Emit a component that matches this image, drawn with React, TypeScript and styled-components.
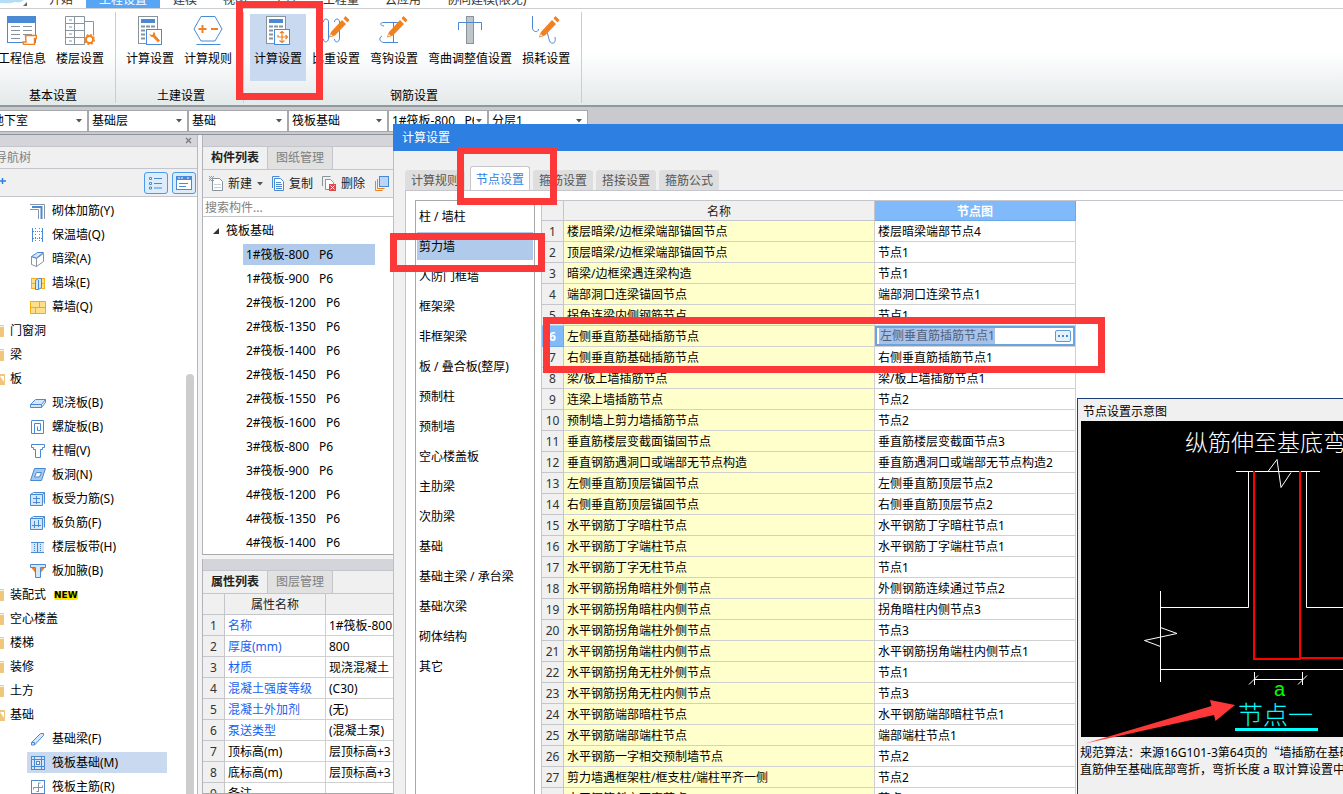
import React from "react";
import styled, { createGlobalStyle, css } from "styled-components";

const BLUE = "#4a8ad4";
const PALE = "#d6e6f8";
const ORANGE = "#f08122";
const GREY = "#87939d";
const LINE = "#c5c6cc";
const MARK = "#fc3838";

const Global = createGlobalStyle`
  * { box-sizing: border-box; }
  html, body, #root { height: 100%; }
  body {
    margin: 0;
    overflow: hidden;
    background: #fff;
    color: #000;
    font: 12px/18px "Noto Sans", "Noto Sans CJK SC", sans-serif;
  }
  button, input, select { font: inherit; color: inherit; border: 0; padding: 0; margin: 0; background: none; }
  ul { list-style: none; margin: 0; padding: 0; }
  svg { display: block; flex: none; }
`;

const Window = styled.div`
  position: relative;
  display: flex;
  flex-direction: column;
  height: 100vh;
  overflow: hidden;
  white-space: nowrap;
`;

/* ---------- menu tabs ---------- */
const MenuBar = styled.nav`
  display: flex;
  align-items: flex-end;
  flex: none;
  height: 9px;
  overflow: hidden;
  border-bottom: 1px solid #cfcfcf;
`;
const Logo = styled.div`
  display: flex;
  align-items: flex-end;
  width: 32px;
  height: 9px;
  flex: none;
  background: #fff;
`;
const MenuTab = styled.button<{ $active?: boolean }>`
  flex: none;
  height: 17px;
  padding: 0 13px;
  line-height: 17px;
  color: #333;
  ${(p) => p.$active && css`background: #57a5f5; color: #fff;`}
`;
const MenuTabs = styled.div`
  display: flex;
  padding-left: 4px;
`;

/* ---------- ribbon ---------- */
const Ribbon = styled.div`
  display: flex;
  flex: none;
  height: 98px;
  background: linear-gradient(#fff 45%, #e4e9ea);
  border-bottom: 2px solid #92979c;
`;
const RibbonGroup = styled.section<{ $first?: boolean }>`
  display: flex;
  flex-direction: column;
  align-items: center;
  margin: 3px 0 2px ${(p) => (p.$first ? "-12px" : "0")};
  padding: 2px 7px 0 6px;
  border-right: 1px solid #cbcdd0;
`;
const RibbonItems = styled.div`
  display: flex;
  gap: 2px;
  flex: none;
`;
const RibbonButton = styled.button<{ $active?: boolean }>`
  display: flex;
  flex-direction: column;
  align-items: center;
  gap: 5px;
  height: 67px;
  padding: 1px 4px 0;
  background: ${(p) => (p.$active ? "#c9d9ef" : "transparent")};
`;
const GroupTitle = styled.div`
  padding: 6px 0 0 4px;
`;

/* ---------- selectors ---------- */
const SelectorBar = styled.div`
  display: flex;
  flex: none;
  height: 28px;
  padding-top: 3px;
  background: #c8cacf;
  border-bottom: 1px solid #8f9499;
`;
const Combo = styled.label<{ $first?: boolean }>`
  display: grid;
  align-items: center;
  flex: none;
  width: 100px;
  height: 22px;
  margin-left: ${(p) => (p.$first ? "-12px" : "0")};
  padding: 0 5px 0 3px;
  background: #fff;
  border: 1px solid #a6a8ab;
  > * { grid-area: 1 / 1; }
  > svg { justify-self: end; background: #fff; }
`;
const ComboSelect = styled.select`
  appearance: none;
  width: 82px;
  height: 18px;
  outline: 0;
  overflow: hidden;
  text-overflow: clip;
`;

/* ---------- docked panels ---------- */
const Workspace = styled.div`
  display: flex;
  flex: 1;
  min-height: 0;
  background: #f3f3f5;
`;
const Dock = styled.aside<{ $w: number }>`
  display: flex;
  flex-direction: column;
  width: ${(p) => p.$w}px;
  flex: none;
  min-height: 0;
`;
const NavDock = styled(Dock)`
  margin-right: 4px;
  border-right: 1px solid #b7b8bf;
`;
const ListDock = styled(Dock)`
  gap: 4px;
`;
const DockPanel = styled.section<{ $h?: number }>`
  display: flex;
  flex-direction: column;
  min-height: 0;
  overflow: hidden;
  flex: ${(p) => (p.$h ? `none` : "1")};
  height: ${(p) => (p.$h ? `${p.$h}px` : "auto")};
  border-left: 1px solid #b2b3b8;
  border-bottom: 1px solid #a9a9a9;
  background: #fff;
`;
const Strip = styled.div`
  display: flex;
  justify-content: flex-end;
  align-items: center;
  flex: none;
  height: 12px;
  padding-right: 5px;
  background: #d4d5db;
  border-bottom: 1px solid ${LINE};
`;
const NavTitle = styled.h2`
  flex: none;
  height: 22px;
  margin: 0 0 0 -5px;
  font: inherit;
  line-height: 21px;
  color: #808080;
  background: #f0f0f0;
  border-bottom: 1px solid ${LINE};
`;
const NavTools = styled.div`
  display: flex;
  align-items: center;
  gap: 4px;
  flex: none;
  height: 28px;
  padding-right: 1px;
  background: #f0f0f0;
  border-bottom: 1px solid ${LINE};
  > :first-child { margin-right: auto; }
`;
const ModeButton = styled.button`
  display: grid;
  place-items: center;
  width: 24px;
  height: 22px;
  background: #dcecfb;
  border: 1px solid #4a9bec;
  border-radius: 3px;
`;
const NavBody = styled.div`
  display: flex;
  flex: 1;
  min-height: 0;
  overflow: hidden;
  background: #fff;
`;
const NavList = styled.ul`
  display: flex;
  flex-direction: column;
  flex: 1;
  padding-top: 2px;
`;
const NavGroup = styled.li`
  display: flex;
  align-items: center;
  gap: 5px;
  flex: none;
  height: 24px;
`;
const NavLeaf = styled.li<{ $active?: boolean }>`
  display: flex;
  align-items: center;
  gap: 6px;
  flex: none;
  height: 21px;
  margin: 1px 19px 2px 27px;
  padding-left: 3px;
  background: ${(p) => (p.$active ? "#c9d9ef" : "transparent")};
`;
const NewBadge = styled.span`
  margin-left: 3px;
  font: bold 9px/9px "DejaVu Sans", sans-serif;
  background: #ffe600;
  border-radius: 2px;
`;
const Track = styled.div`
  width: 11px;
  padding: 177px 3px 0 0;
`;
const Thumb = styled.div`
  height: 100%;
  width: 8px;
  border-radius: 4px 4px 0 0;
  background: #cdcdcd;
`;

const Tabs = styled.div`
  display: flex;
  flex: none;
  height: 23px;
  background: #f0f0f0;
  border-bottom: 1px solid ${LINE};
`;
const PanelTab = styled.button<{ $active?: boolean }>`
  width: 65px;
  height: 22px;
  border-right: 1px solid ${LINE};
  color: #808080;
  background: #e1e1e1;
  ${(p) => p.$active && css`background: #f0f0f0; color: #222; font-weight: bold;`}
`;
const Toolbar = styled.div`
  display: flex;
  align-items: center;
  gap: 9px;
  flex: none;
  height: 28px;
  padding: 0 6px;
  background: #f0f0f0;
  border-bottom: 1px solid ${LINE};
`;
const ToolButton = styled.button`
  display: flex;
  align-items: center;
  gap: 5px;
  flex: none;
  color: #222;
`;
const Search = styled.input`
  flex: none;
  height: 19px;
  padding-left: 2px;
  border-bottom: 1px solid ${LINE};
  outline: 0;
  &::placeholder { color: #808080; opacity: 1; }
`;
const PartTree = styled.div`
  flex: 1;
  min-height: 0;
  overflow: hidden;
  padding-top: 2px;
`;
const PartRoot = styled.div`
  display: flex;
  align-items: center;
  gap: 7px;
  height: 24px;
  padding-left: 10px;
`;
const PartItem = styled.li<{ $active?: boolean }>`
  display: flex;
  gap: 10px;
  height: 21px;
  margin: 1px 67px 3px 40px;
  padding-left: 3px;
  line-height: 21px;
  background: ${(p) => (p.$active ? "#b0caec" : "transparent")};
`;

/* ---------- tables ---------- */
const Grid = styled.table`
  border-collapse: separate;
  border-spacing: 0;
  table-layout: fixed;
  flex: none;
  th, td {
    height: 21px;
    padding: 2px 0 0 3px;
    line-height: 18px;
    font-weight: normal;
    text-align: left;
    overflow: hidden;
    border: solid #d0d0d0;
    border-width: 0 1px 1px 0;
  }
  thead th { background: #f0f0f0; border-color: ${LINE}; text-align: center; color: #222; padding: 2px 0 0; }
  tbody th { background: #f0f0f0; border-color: ${LINE}; text-align: center; color: #333; padding: 2px 0 0; }
`;
const PropTable = styled(Grid)`
  width: 240px;
`;
const PropName = styled.td<{ $link: boolean }>`
  color: ${(p) => (p.$link ? "#1a5ef0" : "#000")};
`;
const NodeTable = styled(Grid)`
  width: 534px;
  thead th { height: 20px; line-height: 17px; }
`;
const NodeHead = styled.th`
  && { background: #80bafa; color: #fff; font-weight: bold; border-color: #6aa9e9; }
`;
const NodeIndex = styled.th<{ $active: boolean }>`
  ${(p) => p.$active && css`&& { background: #80bafa; color: #fff; font-weight: bold; border-color: #6aa9e9; }`}
`;
const NodeName = styled.td`
  background: #ffffcb;
`;
const EditCell = styled.td`
  && { padding: 0; }
`;
const Editor = styled.div`
  display: flex;
  align-items: center;
  justify-content: space-between;
  height: 20px;
  padding: 0 4px;
  outline: 2px solid #69a3e0;
  outline-offset: -2px;
`;
const EditInput = styled.input`
  width: 116px;
  height: 16px;
  padding-left: 1px;
  line-height: 16px;
  color: #50607c;
  background: #a6c2ea;
  outline: 0;
`;
const MoreButton = styled.button`
  display: grid;
  place-items: center;
  width: 16px;
  height: 12px;
  border: 1px solid #5b9bdc;
  border-radius: 2px;
  background: #e6f1fc;
`;

/* ---------- dialog ---------- */
const Dialog = styled.section`
  position: absolute;
  top: 124px;
  left: 393px;
  right: 0;
  bottom: 0;
  display: flex;
  flex-direction: column;
  background: #f0f0f0;
`;
const DialogTitle = styled.h1`
  flex: none;
  margin: 0;
  height: 27px;
  padding-left: 9px;
  font: inherit;
  line-height: 27px;
  color: #fff;
  background: #2d7fe1;
`;
const DialogBody = styled.div`
  display: flex;
  flex-direction: column;
  flex: 1;
  min-height: 0;
  padding: 15px 0 0 11px;
  border-left: 1px solid #bdbdc8;
`;
const DialogTabs = styled.div`
  display: flex;
  align-items: flex-end;
  gap: 3px;
  flex: none;
  height: 24px;
`;
const DialogTab = styled.button<{ $active?: boolean }>`
  flex: none;
  width: 60px;
  height: 20px;
  padding-top: 2px;
  color: #555;
  background: #dedede;
  border-radius: 3px 3px 0 0;
  ${(p) =>
    p.$active &&
    css`
      height: 25px;
      margin: 0 0 -1px 2px;
      color: #2d7fe1;
      background: #fff;
      border: 1px solid ${LINE};
      border-bottom: 0;
    `}
`;
const Pane = styled.div`
  display: flex;
  flex: 1;
  min-height: 0;
  gap: 6px;
  padding: 9px 0 0 9px;
  background: #fff;
  border: solid ${LINE};
  border-width: 1px 0 0 1px;
`;
const CategoryList = styled.ul`
  flex: none;
  width: 120px;
  padding: 1px;
  border: solid #a9a9a9;
  border-width: 1px 1px 0;
`;
const Category = styled.li<{ $active?: boolean }>`
  height: 28px;
  margin-bottom: 2px;
  padding: 2px 0 0 2px;
  line-height: 26px;
  background: ${(p) => (p.$active ? "#b0caec" : "transparent")};
`;
const TableArea = styled.div`
  flex: 1;
  min-width: 0;
  overflow: hidden;
  border: solid ${LINE};
  border-width: 1px 0 0 1px;
`;

/* ---------- node preview ---------- */
const Preview = styled.section`
  position: absolute;
  top: 398px;
  left: 1077px;
  right: 0;
  bottom: 0;
  overflow: hidden;
  padding: 4px 0 0 3px;
  background: #f0f0f0;
  border: solid #1d3f7a;
  border-width: 1px 0 0 1px;
`;
const PreviewTitle = styled.h2`
  margin: 0 0 0 2px;
  font: inherit;
`;
const Drawing = styled.svg`
  background: #000;
`;
const Note = styled.p`
  margin: 7px 0 0 -1px;
  line-height: 17px;
`;
const WideQuote = styled.span`
  font-family: "Noto Sans CJK SC", sans-serif;
  line-height: 1;
`;
const Pointer = styled.svg`
  position: absolute;
  left: 1080px;
  top: 695px;
`;
const Mark = styled.div<{ $x: number; $y: number; $w: number; $h: number }>`
  position: absolute;
  left: ${(p) => p.$x}px;
  top: ${(p) => p.$y}px;
  width: ${(p) => p.$w}px;
  height: ${(p) => p.$h}px;
  border: 7px solid ${MARK};
  pointer-events: none;
`;

/* ---------- icons ---------- */
const Caret = () => (
  <svg width="6" height="4" viewBox="0 0 6 4"><path d="M0 0h6L3 3.5z" fill="#555" /></svg>
);

const CalcBase = () => (
  <>
    <rect x="3.5" y="1.5" width="19" height="27" fill="#fff" stroke={GREY} />
    <rect x="6" y="4" width="14" height="4" fill={BLUE} />
    <path d="M6 11.5h14M6 15.5h14M6 19.5h14M6 23.5h14" stroke={GREY} strokeWidth="2" strokeDasharray="4 1" />
    <rect x="11.5" y="14.5" width="15" height="15" fill="#fff" stroke={BLUE} />
  </>
);
const Pencil = () => (
  <g>
    <path d="M10 17L21 5l4 4L14 20.500l-6 2z" fill={ORANGE} />
    <path d="M22.500 3.500l2-2.500 4 4-2 2.500z" fill={ORANGE} />
    <path d="M8.500 22l1.200-3.500 2.300 2.200z" fill="#fff" stroke={ORANGE} strokeWidth=".6" />
  </g>
);
const ribbonArt: Record<string, React.ReactNode> = {
  info: (
    <>
      <rect x=".5" y="1.500" width="28" height="26" fill="#fff" stroke={BLUE} />
      <rect x="0" y="1" width="29" height="7" fill={BLUE} />
      <path d="M4 11.500h9M16 11.500h9M4 15.500h9M16 15.500h9M4 19.500h9M16 19.500h9M4 23.500h9" stroke={GREY} />
      <path d="M18.500 20.500h11v3h-2v6h-10c-1 0-1.500-1-1.500-2.500h3z" fill="#fff" stroke={ORANGE} strokeWidth="1.500" />
    </>
  ),
  floors: (
    <>
      <path d="M.5 1.500h19v28H.5zM.5 8.500h19M.5 15.500h19M.5 22.500h19M9.500 1.500v28M19.500 6.500h9v14" fill="none" stroke={GREY} />
      <path d="M4 5h3M4 12h3M4 19h3M4 26h3" stroke={GREY} />
      <circle cx="24.500" cy="24.500" r="3.500" fill="#fff" stroke={ORANGE} strokeWidth="2" />
      <circle cx="24.500" cy="24.500" r="4.800" fill="none" stroke={ORANGE} strokeWidth="1.500" strokeDasharray="2 1.770" />
    </>
  ),
  calc: (
    <>
      <CalcBase />
      <path d="M18 20l6 6.500" stroke={ORANGE} strokeWidth="2.600" />
      <path d="M14.500 18.500c0 3 2.500 4 4.500 3s1.500-4-.5-4.500l-.500 2.500-2 .5z" fill={ORANGE} />
    </>
  ),
  rules: (
    <>
      <path d="M8 1.500h14l7 12.500-7 12H8L1 14zM3.500 29.500h24" fill="none" stroke={BLUE} />
      <path d="M5.500 14h8M9.500 10v8M18 14h7" stroke={ORANGE} strokeWidth="2" />
    </>
  ),
  bend: (
    <>
      <CalcBase />
      <path d="M19 17v10M19 22h5M15 20v2h4M16.500 25.500l2.500 2 2.500-2M22.500 20l2 2-2 2M17 18l2-1.500 2 1.500" stroke={ORANGE} strokeWidth="1.200" fill="none" />
    </>
  ),
  weight: (
    <>
      <path d="M2.500 7c0-4 5-4 5 0v16c0 5-5 5-5 1M13.500 7c0-4 5-4 5 0v16c0 5-5 5-5 1" fill="none" stroke={BLUE} />
      <Pencil />
    </>
  ),
  hook: (
    <>
      <path d="M5 11c-5-1-4-3.500 0-3.500h14M14.500 8v20M3 21c-4 2-2 6.500 2 6.500h14" fill="none" stroke={BLUE} />
      <Pencil />
    </>
  ),
  adjust: (
    <>
      <rect x="11.500" y="1.500" width="7" height="27" fill="#bfc6ca" stroke={GREY} />
      <path d="M3.500 15V7.500h23V15" fill="none" stroke={BLUE} />
    </>
  ),
  loss: (
    <>
      <path d="M1.500 1v12c0 4 6 5 6 1M12.500 15c6 0 4 12 8 13s4-3 3.500-6" fill="none" stroke={BLUE} />
      <Pencil />
    </>
  ),
};
const RibbonIcon = ({ k }: { k: string }) => (
  <svg width="30" height="30" viewBox="0 0 30 30">{ribbonArt[k]}</svg>
);

const navArt: Record<string, React.ReactNode> = {
  masonry: <><path d="M0 1.500h14.500V16M0 6.500h8.500V16" fill="none" stroke={GREY} /><path d="M2 4h9.500v12" fill="none" stroke={BLUE} strokeWidth="2" /></>,
  insul: <><path d="M2.500 1v14M12.500 1v14" stroke={BLUE} /><path d="M5.500 1v14M9.500 1v14" stroke={BLUE} strokeDasharray="1 2" /><path d="M3 4.500h9M3 11.500h9" stroke={BLUE} strokeDasharray="1 1" /></>,
  beam: <><path d="M1.500 5.500l5 2v8l-5-2zM6.500 7.500l7-5v8l-7 5" fill="#fff" stroke={GREY} /><path d="M1.500 5.500l6-4h6l-7 5.500z" fill={PALE} stroke={BLUE} /></>,
  pier: <><rect x="1.500" y="3.500" width="13" height="10" fill="#ffe08a" stroke="#f5b11c" /><path d="M2 8.500h13" stroke="#f5b11c" /><path d="M5.500 5.500l3-2h3v9l-3 2h-3zM8.500 5v9" fill={PALE} stroke={BLUE} /></>,
  curtain: <><path d="M.5 2.500h15v12H.5zM.5 8.500h15M9.500 2.500v6M5.500 8.500v6" fill="#ffe08a" stroke="#f7ac00" /></>,
  slab: <><path d="M.5 9.500l5-5h10l-4 5z M.5 9.500v3h11v-3M11.500 12.500l4-5v-3" fill={PALE} stroke={BLUE} /></>,
  spiral: <path d="M1.500 2v12.500h12v-13h-12M4.500 14.500v-10h6v7h-3v-4" fill="none" stroke={BLUE} />,
  cap: <path d="M1.500 1.500h13v3h-2v2h-2v8h-5v-8h-2v-2h-2z" fill="#fff" stroke={BLUE} />,
  hole: <><path d="M4.500 1.500h11l-4 12h-11z" fill="#a5c8ef" stroke={BLUE} /><path d="M6.500 5.500h5l-2 4.500h-5z" fill="#fff" stroke={BLUE} /></>,
  rebarS: <><path d="M3.500 1.500h11v11M.5 3.500h12v11H.5zM12.500 3.500l2-2M.5 3.500l3-2" fill={PALE} stroke={BLUE} /><path d="M3 7.500h7M3 11.500h7M6.500 5v8" stroke={BLUE} /></>,
  rebarF: <><path d="M3.500 1.500h11v11M.5 3.500h12v11H.5zM12.500 3.500l2-2M.5 3.500l3-2" fill={PALE} stroke={BLUE} /><path d="M2 10.500h9M4.500 6v7M8.500 5v7" stroke={BLUE} /></>,
  strip: <><rect x="1" y="3" width="13" height="11" fill={PALE} /><path d="M1 3.500h13M1 13.500h13M7.500 3v11" stroke={BLUE} /><path d="M4.500 5v8M10.500 5v8" stroke={BLUE} strokeDasharray="1 1" /></>,
  haunch: <><path d="M.5 1.500h15v3h-5v10h-5v-10h-5z" fill={PALE} stroke={BLUE} /><path d="M1.500 5H5v4.500zM14.500 5H11v4.500z" fill={ORANGE} /></>,
  fbeam: <path d="M1.500 11.500l9-9h3v2l-9 9.500h-3zM1.500 11.500h3v2.500" fill={PALE} stroke={BLUE} />,
  raft: <><rect x="1.500" y="1.500" width="13" height="13" fill={PALE} stroke={BLUE} /><path d="M4.500 1v14M11.500 1v14M1 4.500h14M1 11.500h14" stroke={BLUE} /><rect x="6.500" y="6.500" width="3" height="3" fill="#fff" stroke={BLUE} /></>,
  raftbar: <><rect x="1.500" y="1.500" width="13" height="13" fill="#fff" stroke={BLUE} /><path d="M8.500 4v9M3.500 8.500h9v-2M3.500 8.500v2M8.500 4h2M8.500 12.500h-2" fill="none" stroke={GREY} /></>,
};
const NavIcon = ({ k }: { k: string }) => (
  <svg width="16" height="16" viewBox="0 0 16 16">{navArt[k]}</svg>
);
const Folder = ({ open }: { open?: boolean }) => (
  <svg width="5" height="14" viewBox="0 0 5 14">
    {open ? (
      <><path d="M0 2h5v11H0z" fill="#f0c57c" /><path d="M0 4h4v6z" fill="#fff" /></>
    ) : (
      <><path d="M0 1h4v12H0z" fill="#f0c57c" /><path d="M0 2.500h4" stroke="#fff4dc" /></>
    )}
  </svg>
);

/* ---------- data ---------- */
const menus = ["开始", "工程设置", "建模", "视图", "工具", "工程量", "云应用", "协同建模(限免)"];
const ribbonGroups = [
  { title: "基本设置", items: [["工程信息", "info"], ["楼层设置", "floors"]] },
  { title: "土建设置", items: [["计算设置", "calc"], ["计算规则", "rules"]] },
  { title: "钢筋设置", items: [["计算设置", "bend"], ["比重设置", "weight"], ["弯钩设置", "hook"], ["弯曲调整值设置", "adjust"], ["损耗设置", "loss"]] },
];
const combos = ["地下室", "基础层", "基础", "筏板基础", "1#筏板-800\u00a0\u00a0\u00a0P6", "分层1"];
type Nav = { t: string; k?: string; open?: boolean; badge?: string };
const nav: Nav[] = [
  { t: "砌体加筋(Y)", k: "masonry" }, { t: "保温墙(Q)", k: "insul" }, { t: "暗梁(A)", k: "beam" },
  { t: "墙垛(E)", k: "pier" }, { t: "幕墙(Q)", k: "curtain" },
  { t: "门窗洞" }, { t: "梁" }, { t: "板", open: true },
  { t: "现浇板(B)", k: "slab" }, { t: "螺旋板(B)", k: "spiral" }, { t: "柱帽(V)", k: "cap" }, { t: "板洞(N)", k: "hole" },
  { t: "板受力筋(S)", k: "rebarS" }, { t: "板负筋(F)", k: "rebarF" }, { t: "楼层板带(H)", k: "strip" }, { t: "板加腋(B)", k: "haunch" },
  { t: "装配式", badge: "NEW" }, { t: "空心楼盖" }, { t: "楼梯" }, { t: "装修" }, { t: "土方" }, { t: "基础", open: true },
  { t: "基础梁(F)", k: "fbeam" }, { t: "筏板基础(M)", k: "raft" }, { t: "筏板主筋(R)", k: "raftbar" },
];
const parts = ["1#筏板-800", "1#筏板-900", "2#筏板-1200", "2#筏板-1350", "2#筏板-1400", "2#筏板-1450", "2#筏板-1550", "2#筏板-1600", "3#筏板-800", "3#筏板-900", "4#筏板-1200", "4#筏板-1350", "4#筏板-1400"];
const props: [string, string][] = [
  ["名称", "1#筏板-800\u00a0\u00a0P6"], ["厚度(mm)", "800"], ["材质", "现浇混凝土"], ["混凝土强度等级", "(C30)"],
  ["混凝土外加剂", "(无)"], ["泵送类型", "(混凝土泵)"], ["顶标高(m)", "层顶标高+3"], ["底标高(m)", "层顶标高+3"], ["备注", ""],
];
const categories = ["柱 / 墙柱", "剪力墙", "人防门框墙", "框架梁", "非框架梁", "板 / 叠合板(整厚)", "预制柱", "预制墙", "空心楼盖板", "主肋梁", "次肋梁", "基础", "基础主梁 / 承台梁", "基础次梁", "砌体结构", "其它"];
const nodes: [string, string][] = [
  ["楼层暗梁/边框梁端部锚固节点", "楼层暗梁端部节点4"],
  ["顶层暗梁/边框梁端部锚固节点", "节点1"],
  ["暗梁/边框梁遇连梁构造", "节点1"],
  ["端部洞口连梁锚固节点", "端部洞口连梁节点1"],
  ["拐角连梁内侧钢筋节点", "节点1"],
  ["左侧垂直筋基础插筋节点", "左侧垂直筋插筋节点1"],
  ["右侧垂直筋基础插筋节点", "右侧垂直筋插筋节点1"],
  ["梁/板上墙插筋节点", "梁/板上墙插筋节点1"],
  ["连梁上墙插筋节点", "节点2"],
  ["预制墙上剪力墙插筋节点", "节点2"],
  ["垂直筋楼层变截面锚固节点", "垂直筋楼层变截面节点3"],
  ["垂直钢筋遇洞口或端部无节点构造", "垂直筋遇洞口或端部无节点构造2"],
  ["左侧垂直筋顶层锚固节点", "左侧垂直筋顶层节点2"],
  ["右侧垂直筋顶层锚固节点", "右侧垂直筋顶层节点2"],
  ["水平钢筋丁字暗柱节点", "水平钢筋丁字暗柱节点1"],
  ["水平钢筋丁字端柱节点", "水平钢筋丁字端柱节点1"],
  ["水平钢筋丁字无柱节点", "节点1"],
  ["水平钢筋拐角暗柱外侧节点", "外侧钢筋连续通过节点2"],
  ["水平钢筋拐角暗柱内侧节点", "拐角暗柱内侧节点3"],
  ["水平钢筋拐角端柱外侧节点", "节点3"],
  ["水平钢筋拐角端柱内侧节点", "水平钢筋拐角端柱内侧节点1"],
  ["水平钢筋拐角无柱外侧节点", "节点1"],
  ["水平钢筋拐角无柱内侧节点", "节点3"],
  ["水平钢筋端部暗柱节点", "水平钢筋端部暗柱节点1"],
  ["水平钢筋端部端柱节点", "端部端柱节点1"],
  ["水平钢筋一字相交预制墙节点", "节点2"],
  ["剪力墙遇框架柱/框支柱/端柱平齐一侧", "节点2"],
  ["水平钢筋斜交丁字节点", "节点1"],
];

const NodeDrawing = () => (
  <Drawing width="320" height="316" viewBox="0 0 320 316">
    <g fontFamily='"Noto Sans CJK SC", sans-serif' fontWeight="300">
      <text x="104" y="30" fontSize="23" fill="#fff">纵筋伸至基底弯折</text>
      <text x="157" y="303" fontSize="25" fill="#00ffff">节点一</text>
    </g>
    <text x="193" y="275" fontSize="20" fill="#00ff00" fontFamily='"Liberation Sans", sans-serif'>a</text>
    <g fill="none" stroke="#fff">
      <path d="M155 50.500h84M167.500 50v136.500h-88M225.500 50v136.500H320M79.500 170v91M79.500 248.500H320" />
      <path d="M187 50.500l9-12 4 28 10-15M79.500 206.500l16.500 6-32.500 7 16 6" />
      <path d="M173.500 251v13M221.500 251v13M173 258.500h49M168 263.500l9-9M217 263.500l9-9" />
    </g>
    <path d="M173 50v188h46V50M219 237h101" fill="none" stroke="#f00" strokeWidth="2" />
    <path d="M154 308.500h83" stroke="#00ffff" strokeWidth="3" />
  </Drawing>
);

export default function App() {
  return (
    <>
      <Global />
      <Window>
        <MenuBar>
          <Logo>
            <svg width="32" height="9" viewBox="0 0 32 9">
              <path d="M0 0h25c-3 3-6 4-10 3-5 2-10 1-15 1z" fill="#b5def5" />
              <path d="M27 3v4h-4z" fill="#666" />
            </svg>
          </Logo>
          <MenuTabs>
            {menus.map((m, i) => <MenuTab key={m} $active={i === 1}>{m}</MenuTab>)}
          </MenuTabs>
        </MenuBar>

        <Ribbon>
          {ribbonGroups.map((g, gi) => (
            <RibbonGroup key={g.title} $first={gi === 0}>
              <RibbonItems>
                {g.items.map(([t, k]) => (
                  <RibbonButton key={k} $active={k === "bend"}><RibbonIcon k={k} />{t}</RibbonButton>
                ))}
              </RibbonItems>
              <GroupTitle>{g.title}</GroupTitle>
            </RibbonGroup>
          ))}
        </Ribbon>

        <SelectorBar>
          {combos.map((c, i) => (
            <Combo key={c} $first={i === 0}>
              <ComboSelect aria-label={c}><option>{c}</option></ComboSelect>
              <Caret />
            </Combo>
          ))}
        </SelectorBar>

        <Workspace>
          <NavDock $w={198}>
            <Strip>
              <svg width="7" height="7" viewBox="0 0 7 7"><path d="M1 1l5 5M6 1l-5 5" stroke="#777" strokeWidth="1.200" /></svg>
            </Strip>
            <NavTitle>导航树</NavTitle>
            <NavTools>
              <svg width="6" height="12" viewBox="0 0 6 12"><path d="M0 4h6M2.500 1v6" stroke="#2d7fe1" strokeWidth="1.500" /></svg>
              <ModeButton aria-label="列表">
                <svg width="14" height="14" viewBox="0 0 14 14"><path d="M5 2.500h8M5 7.500h8M5 12h8" stroke={BLUE} /><path d="M.5 1.500h2v2h-2zM.5 6.500h2v2h-2zM.5 11h2v2h-2z" fill="#fff" stroke={BLUE} /></svg>
              </ModeButton>
              <ModeButton aria-label="图标">
                <svg width="16" height="14" viewBox="0 0 16 14"><rect x=".5" y=".5" width="15" height="13" fill="#fff" stroke={BLUE} /><path d="M0 0h16v4H0z" fill={BLUE} /><path d="M2 2h6M11 2h3" stroke="#fff" strokeDasharray="2 1" /><path d="M3 7.500h9M3 10.500h7" stroke={BLUE} /></svg>
              </ModeButton>
            </NavTools>
            <NavBody>
              <NavList>
                {nav.map((n) =>
                  n.k ? (
                    <NavLeaf key={n.t} $active={n.k === "raft"}><NavIcon k={n.k} />{n.t}</NavLeaf>
                  ) : (
                    <NavGroup key={n.t}><Folder open={n.open} />{n.t}{n.badge && <NewBadge>{n.badge}</NewBadge>}</NavGroup>
                  )
                )}
              </NavList>
              <Track><Thumb /></Track>
            </NavBody>
          </NavDock>

          <ListDock $w={240}>
            <DockPanel>
              <Strip />
              <Tabs>
                <PanelTab $active>构件列表</PanelTab>
                <PanelTab>图纸管理</PanelTab>
              </Tabs>
              <Toolbar>
                <ToolButton>
                  <svg width="14" height="15" viewBox="0 0 14 15"><path d="M3.500 2.500h7l3 3v9h-10z" fill="#fff" stroke={GREY} /><path d="M5 8.500h7M5 11.500h7" stroke="#c9cdd1" /><path d="M0 .5h5M1 1.500h4M0 2.500h5M1 3.500h4M0 4.500h5" stroke={ORANGE} strokeDasharray="1 1" /></svg>
                  新建<Caret />
                </ToolButton>
                <ToolButton>
                  <svg width="12" height="15" viewBox="0 0 12 15"><path d="M.5 12V.5h7" fill="none" stroke={BLUE} /><path d="M2.500 2.500h6l3 3v9h-9z" fill="#fff" stroke={BLUE} /><path d="M4 6.500h5M4 8.500h6M4 10.500h6M4 12.500h6" stroke={BLUE} /></svg>
                  复制
                </ToolButton>
                <ToolButton>
                  <svg width="14" height="15" viewBox="0 0 14 15"><path d="M.5 10V.5h8" fill="none" stroke={GREY} /><path d="M3.500 12V3.500h5l3 3v7h-8z" fill="#fff" stroke={GREY} /><rect x="7" y="8" width="7" height="7" fill="#d9484a" /><path d="M8.500 9.500l4 4M12.500 9.500l-4 4" stroke="#fff" /></svg>
                  删除
                </ToolButton>
                <ToolButton aria-label="层间复制">
                  <svg width="15" height="15" viewBox="0 0 15 15"><path d="M1.500 5v9.500h7M3.500 3v9.500h7" fill="none" stroke={ORANGE} /><rect x="5.500" y=".5" width="9" height="10" fill="#b9d6f8" stroke={BLUE} /></svg>
                </ToolButton>
              </Toolbar>
              <Search placeholder="搜索构件..." aria-label="搜索构件" />
              <PartTree>
                <PartRoot>
                  <svg width="6" height="6" viewBox="0 0 6 6"><path d="M6 0v6H0z" fill="#333" /></svg>
                  筏板基础
                </PartRoot>
                <ul>
                  {parts.map((p, i) => <PartItem key={p} $active={i === 0}><span>{p}</span><span>P6</span></PartItem>)}
                </ul>
              </PartTree>
            </DockPanel>

            <DockPanel $h={235}>
              <Strip />
              <Tabs>
                <PanelTab $active>属性列表</PanelTab>
                <PanelTab>图层管理</PanelTab>
              </Tabs>
              <PropTable>
                <colgroup><col style={{ width: 22 }} /><col style={{ width: 101 }} /><col /></colgroup>
                <thead><tr><th /><th>属性名称</th><th /></tr></thead>
                <tbody>
                  {props.map(([n, v], i) => (
                    <tr key={n}><th>{i + 1}</th><PropName $link={i < 6}>{n}</PropName><td>{v}</td></tr>
                  ))}
                </tbody>
              </PropTable>
            </DockPanel>
          </ListDock>
        </Workspace>

        <Dialog role="dialog" aria-label="计算设置">
          <DialogTitle>计算设置</DialogTitle>
          <DialogBody>
            <DialogTabs>
              {["计算规则", "节点设置", "箍筋设置", "搭接设置", "箍筋公式"].map((t, i) => (
                <DialogTab key={t} $active={i === 1}>{t}</DialogTab>
              ))}
            </DialogTabs>
            <Pane>
              <CategoryList>
                {categories.map((c, i) => <Category key={c} $active={i === 1}>{c}</Category>)}
              </CategoryList>
              <TableArea>
                <NodeTable>
                  <colgroup><col style={{ width: 22 }} /><col style={{ width: 311 }} /><col /></colgroup>
                  <thead><tr><th /><th>名称</th><NodeHead>节点图</NodeHead></tr></thead>
                  <tbody>
                    {nodes.map(([n, v], i) => (
                      <tr key={n}>
                        <NodeIndex $active={i === 5}>{i + 1}</NodeIndex>
                        <NodeName>{n}</NodeName>
                        {i === 5 ? (
                          <EditCell>
                            <Editor>
                              <EditInput defaultValue={v} aria-label={n} />
                              <MoreButton aria-label="选择节点图">
                                <svg width="10" height="2" viewBox="0 0 10 2"><path d="M0 1h10" stroke={BLUE} strokeWidth="2" strokeDasharray="2 2" /></svg>
                              </MoreButton>
                            </Editor>
                          </EditCell>
                        ) : (
                          <td>{v}</td>
                        )}
                      </tr>
                    ))}
                  </tbody>
                </NodeTable>
              </TableArea>
            </Pane>
          </DialogBody>
        </Dialog>

        <Preview>
          <PreviewTitle>节点设置示意图</PreviewTitle>
          <NodeDrawing />
          <Note>规范算法：来源16G101-3第64页的<WideQuote>“</WideQuote>墙插筋在基础<br />直筋伸至基础底部弯折，弯折长度 a 取计算设置中</Note>
        </Preview>

        <Pointer width="160" height="52" viewBox="0 0 160 52">
          <path d="M5 48.500L131.500 11l-1.500-6 25 5-19.500 16-1.500-6z" fill={MARK} />
        </Pointer>
        <Mark $x={236} $y={1} $w={87} $h={99} />
        <Mark $x={457} $y={147} $w={100} $h={58} />
        <Mark $x={390} $y={233} $w={155} $h={39} />
        <Mark $x={543} $y={317} $w={562} $h={56} />
      </Window>
    </>
  );
}
